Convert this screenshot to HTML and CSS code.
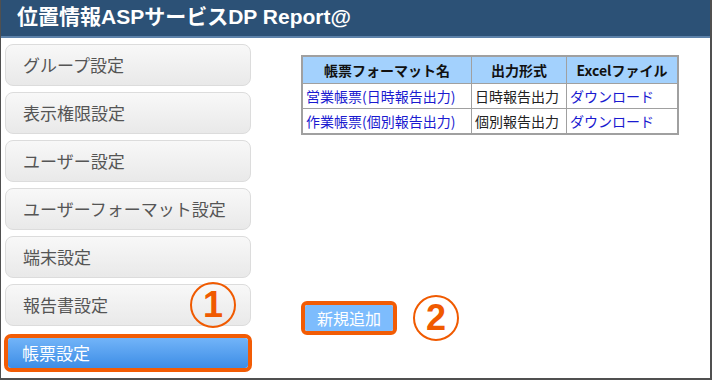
FILE: index.html
```html
<!DOCTYPE html>
<html lang="ja">
<head>
  <meta charset="UTF-8" />
  <title>位置情報ASPサービスDP Report@</title>
  <link rel="stylesheet" href="styles.css">
</head>
<body>
  <div class="frame">
    <div class="header">位置情報ASPサービスDP Report@</div>
    <div class="main">
      <div class="sidebar">
        <div class="menu">グループ設定</div>
        <div class="menu">表示権限設定</div>
        <div class="menu">ユーザー設定</div>
        <div class="menu">ユーザーフォーマット設定</div>
        <div class="menu">端末設定</div>
        <div class="menu">報告書設定<span class="mark mark-1">1</span></div>
        <div class="menu-hl"><div class="menu active">帳票設定</div></div>
      </div>
      <div class="content">
        <table class="list">
          <tr>
            <th class="c1">帳票フォーマット名</th>
            <th class="c2">出力形式</th>
            <th class="c3">Excelファイル</th>
          </tr>
          <tr>
            <td><a href="#">営業帳票(日時報告出力)</a></td>
            <td>日時報告出力</td>
            <td><a href="#">ダウンロード</a></td>
          </tr>
          <tr>
            <td><a href="#">作業帳票(個別報告出力)</a></td>
            <td>個別報告出力</td>
            <td><a href="#">ダウンロード</a></td>
          </tr>
        </table>
        <div class="add-row">
          <div class="add-hl"><div class="add-btn">新規追加</div></div>
          <span class="mark">2</span>
        </div>
      </div>
    </div>
  </div>
</body>
</html>
```

FILE: styles.css
```css
body {
  margin: 0;
  font-family: "Noto Sans CJK JP", "Noto Sans", sans-serif;
}
.frame {
  width: 712px;
  height: 380px;
  box-sizing: border-box;
  border: 2px solid #505050;
  border-left-width: 1px;
  border-top: none;
  overflow: hidden;
  background: #fff;
}
.header {
  height: 36px;
  background: #2c5176;
  border-bottom: 2px solid #5d82aa;
  color: #fff;
  font-size: 21px;
  font-weight: bold;
  line-height: 34px;
  padding-left: 16px;
  font-family: "Liberation Sans", "Noto Sans CJK JP", sans-serif;
}
.main {
  display: flex;
}
.sidebar {
  width: 246px;
  padding: 6px 0 0 4px;
  display: flex;
  flex-direction: column;
  gap: 6px;
}
.menu {
  position: relative;
  height: 42px;
  box-sizing: border-box;
  border: 1px solid #dcdcdc;
  border-radius: 8px;
  background: linear-gradient(#f8f8f8, #e9e9e9);
  color: #555;
  font-size: 17px;
  line-height: 40px;
  padding-left: 17px;
}
.menu-hl {
  margin-top: 2px;
  margin-left: -1px;
  border: 4px solid #f25c05;
  border-radius: 7px;
  width: 240px;
}
.menu.active {
  height: 30px;
  line-height: 30px;
  border: none;
  border-radius: 3px;
  background: linear-gradient(#72b4f8, #3d8de6);
  color: #fff;
  padding-left: 14px;
}
.mark {
  display: inline-block;
  width: 42px;
  height: 42px;
  border: 2px solid #f05a00;
  border-radius: 50%;
  color: #f05a00;
  font-size: 36px;
  font-weight: bold;
  line-height: 42px;
  text-align: center;
  font-family: "Liberation Sans", sans-serif;
}
.mark-1 {
  position: absolute;
  left: 184px;
  top: -3px;
}
.content {
  padding: 17px 0 0 50px;
}
.list {
  border-collapse: collapse;
  font-size: 14px;
  border: 2px solid #a0a0a0;
}
.list th {
  background: #a3d1fd;
  border: 1px solid #a0a0a0;
  height: 26px;
  padding: 0 3px;
  font-weight: bold;
  color: #111;
}
.list td {
  border: 1px solid #a0a0a0;
  height: 24px;
  padding: 0 3px;
  color: #222;
}
.list a {
  color: #1a1ad0;
  text-decoration: none;
}
.c1 { width: 162px; }
.c2 { width: 88px; }
.c3 { width: 104px; }
.add-row {
  display: flex;
  align-items: center;
  gap: 16px;
  margin-top: 160px;
}
.add-hl {
  border: 4px solid #f25c05;
  border-radius: 6px;
}
.add-btn {
  background: #7dbcfd;
  color: #fff;
  font-size: 16px;
  padding: 0 12px;
  line-height: 26px;
  border-radius: 2px;
}
```
